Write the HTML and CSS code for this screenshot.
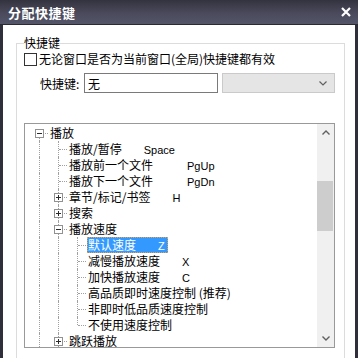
FILE: index.html
```html
<!DOCTYPE html>
<html>
<head>
    <meta charset="utf-8">
    <title>分配快捷键</title>
    <link rel="stylesheet" href="styles.css">
</head>
<body>
    <div class="dialog">
        <div class="titlebar">
            <span class="title">分配快捷键</span>
            <svg class="close" width="10" height="10" viewBox="0 0 10 10">
                <path d="M1 1L9 9M9 1L1 9" stroke="#fff" stroke-width="2.2"/>
            </svg>
        </div>
        <div class="content">
            <fieldset class="group">
                <legend>快捷键</legend>
                <label class="check"><span class="box"></span>无论窗口是否为当前窗口(全局)快捷键都有效</label>
                <div class="key-row">
                    <span class="key-label">快捷键:</span>
                    <input class="key-input" type="text" value="无">
                    <div class="combo">
                        <svg width="8" height="5" viewBox="0 0 8 5"><path d="M0.5 0.5L4 4L7.5 0.5" fill="none" stroke="#606060" stroke-width="1.2"/></svg>
                    </div>
                </div>
                <div class="tree">
                    <div class="tree-list">
                        <div class="row">
                            <span class="c down h"><svg class="btn" viewBox="0 0 9 9"><rect x="0.5" y="0.5" width="8" height="8"/><path d="M2 4.5h5"/></svg></span>
                            <span class="txt">播放</span>
                        </div>
                        <div class="row">
                            <span class="c v"></span><span class="c t"></span>
                            <span class="txt">播放/暂停<span class="key">Space</span></span>
                        </div>
                        <div class="row">
                            <span class="c v"></span><span class="c t"></span>
                            <span class="txt">播放前一个文件<span class="key wide">PgUp</span></span>
                        </div>
                        <div class="row">
                            <span class="c v"></span><span class="c t"></span>
                            <span class="txt">播放下一个文件<span class="key wide">PgDn</span></span>
                        </div>
                        <div class="row">
                            <span class="c v"></span>
                            <span class="c t"><svg class="btn" viewBox="0 0 9 9"><rect x="0.5" y="0.5" width="8" height="8"/><path d="M2 4.5h5M4.5 2v5"/></svg></span>
                            <span class="txt">章节/标记/书签<span class="key">H</span></span>
                        </div>
                        <div class="row">
                            <span class="c v"></span>
                            <span class="c t"><svg class="btn" viewBox="0 0 9 9"><rect x="0.5" y="0.5" width="8" height="8"/><path d="M2 4.5h5M4.5 2v5"/></svg></span>
                            <span class="txt">搜索</span>
                        </div>
                        <div class="row">
                            <span class="c v"></span>
                            <span class="c t"><svg class="btn" viewBox="0 0 9 9"><rect x="0.5" y="0.5" width="8" height="8"/><path d="M2 4.5h5"/></svg></span>
                            <span class="txt">播放速度</span>
                        </div>
                        <div class="row">
                            <span class="c v"></span><span class="c v"></span><span class="c t"></span>
                            <span class="txt sel">默认速度<span class="key">Z</span></span>
                        </div>
                        <div class="row">
                            <span class="c v"></span><span class="c v"></span><span class="c t"></span>
                            <span class="txt">减慢播放速度<span class="key">X</span></span>
                        </div>
                        <div class="row">
                            <span class="c v"></span><span class="c v"></span><span class="c t"></span>
                            <span class="txt">加快播放速度<span class="key">C</span></span>
                        </div>
                        <div class="row">
                            <span class="c v"></span><span class="c v"></span><span class="c t"></span>
                            <span class="txt">高品质即时速度控制 (推荐)</span>
                        </div>
                        <div class="row">
                            <span class="c v"></span><span class="c v"></span><span class="c t"></span>
                            <span class="txt">非即时低品质速度控制</span>
                        </div>
                        <div class="row">
                            <span class="c v"></span><span class="c v"></span><span class="c l"></span>
                            <span class="txt">不使用速度控制</span>
                        </div>
                        <div class="row">
                            <span class="c v"></span>
                            <span class="c t"><svg class="btn" viewBox="0 0 9 9"><rect x="0.5" y="0.5" width="8" height="8"/><path d="M2 4.5h5M4.5 2v5"/></svg></span>
                            <span class="txt">跳跃播放</span>
                        </div>
                    </div>
                    <div class="scrollbar">
                        <div class="sb-btn">
                            <svg width="8" height="5" viewBox="0 0 8 5"><path d="M0.5 4.5L4 1L7.5 4.5" fill="none" stroke="#606060" stroke-width="1.4"/></svg>
                        </div>
                        <div class="sb-track"><div class="sb-thumb"></div></div>
                        <div class="sb-btn">
                            <svg width="8" height="5" viewBox="0 0 8 5"><path d="M0.5 0.5L4 4L7.5 0.5" fill="none" stroke="#606060" stroke-width="1.4"/></svg>
                        </div>
                    </div>
                </div>
            </fieldset>
        </div>
    </div>
</body>
</html>
```

FILE: styles.css
```css
body {
    margin: 0;
    font-family: "Noto Sans CJK SC", sans-serif;
    font-size: 12px;
    color: #000;
}

.dialog {
    width: 358px;
    height: 358px;
    background-color: #2f2f3b;
    display: flex;
    flex-direction: column;
    overflow: hidden;
}

.titlebar {
    height: 25px;
    flex: none;
    display: flex;
    align-items: center;
    justify-content: space-between;
    padding: 0 7px 0 8px;
    background: linear-gradient(#33333f, #4a4a5c 55%, #55556a);
    border-bottom: 1px solid #2a2a34;
    box-sizing: border-box;
}

.title {
    color: #fff;
    font-weight: bold;
    font-size: 13px;
    letter-spacing: 0.5px;
}

.content {
    flex: 1;
    background-color: #fff;
    margin: 0 3px;
    padding: 11px 12px 0 13px;
    overflow: hidden;
}

.group {
    margin: 0;
    padding: 1px 9px 30px 7px;
    border: 1px solid #dcdcdc;
}

.group legend {
    padding: 0;
    line-height: 14px;
}

.check {
    display: flex;
    align-items: center;
    height: 16px;
    line-height: 16px;
}

.check .box {
    width: 13px;
    height: 13px;
    border: 1px solid #333;
    box-sizing: border-box;
    margin-right: 2px;
}

.key-row {
    display: flex;
    align-items: center;
    margin-top: 6px;
    padding-left: 16px;
    height: 20px;
}

.key-label {
    width: 40px;
    margin-right: 4px;
}

.key-input {
    width: 134px;
    height: 20px;
    box-sizing: border-box;
    border: 1px solid #7a7a7a;
    padding: 0 3px;
    font-family: inherit;
    font-size: 12px;
    margin: 0;
}

.combo {
    width: 113px;
    height: 20px;
    flex: none;
    margin-left: 4px;
    box-sizing: border-box;
    border: 1px solid #cacaca;
    background-color: #e5e5e5;
    display: flex;
    align-items: center;
    justify-content: flex-end;
    padding-right: 7px;
}

.tree {
    margin-top: 30px;
    height: 225px;
    border: 1px solid #999;
    box-sizing: border-box;
    display: flex;
}

.tree-list {
    flex: 1;
    padding: 1px 0 0 5px;
    overflow: hidden;
}

.row {
    display: flex;
    height: 16px;
    line-height: 16px;
    white-space: nowrap;
}

.c {
    width: 19px;
    height: 16px;
    flex: none;
    position: relative;
}

.c::before,
.c::after {
    content: '';
    position: absolute;
}

.v::before,
.t::before {
    left: 9px;
    top: 0;
    bottom: 0;
    border-left: 1px dotted #a0a0a0;
}

.l::before {
    left: 9px;
    top: 0;
    height: 8px;
    border-left: 1px dotted #a0a0a0;
}

.down::before {
    left: 9px;
    top: 8px;
    bottom: 0;
    border-left: 1px dotted #a0a0a0;
}

.t::after,
.l::after,
.h::after {
    left: 10px;
    top: 8px;
    width: 8px;
    border-top: 1px dotted #a0a0a0;
}

.btn {
    position: absolute;
    left: 5px;
    top: 4px;
    width: 9px;
    height: 9px;
    z-index: 1;
}

.btn rect {
    fill: #fff;
    stroke: #919191;
    stroke-width: 1;
}

.btn path {
    stroke: #2b2b2b;
    stroke-width: 1;
}

.txt {
    padding: 0 1px;
    height: 16px;
}

.sel {
    background-color: #3399ff;
    color: #fff;
    outline: 1px dotted #e8a040;
    outline-offset: -1px;
    padding-right: 3px;
}

.key {
    font-family: "Liberation Sans", Arial, sans-serif;
    font-size: 11px;
    margin-left: 22px;
}

.key.wide {
    margin-left: 34px;
}

.scrollbar {
    width: 17px;
    flex: none;
    background-color: #f0f0f0;
    display: flex;
    flex-direction: column;
}

.sb-btn {
    height: 17px;
    display: flex;
    align-items: center;
    justify-content: center;
}

.sb-track {
    flex: 1;
}

.sb-thumb {
    margin: 40px 1px 0 0;
    height: 50px;
    background-color: #cdcdcd;
}
```
